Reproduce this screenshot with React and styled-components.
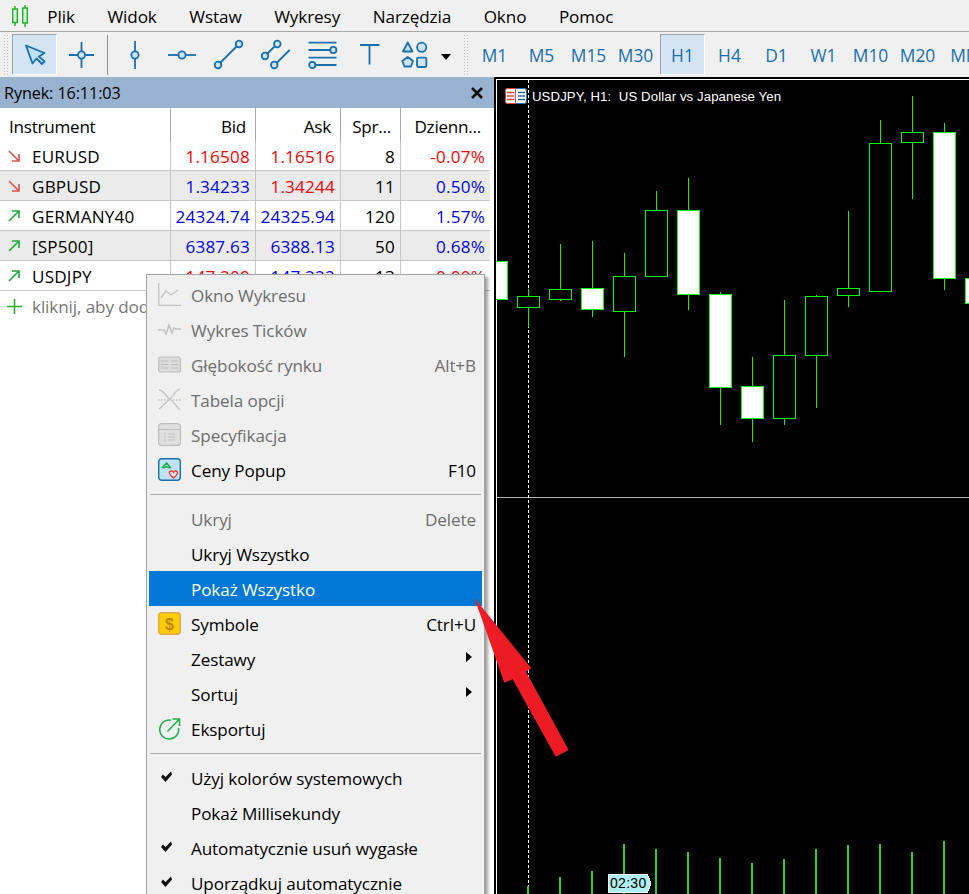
import React from "react";
import styled, { createGlobalStyle } from "styled-components";

const Global = createGlobalStyle`
  html, body { margin: 0; padding: 0; background: #fff; }
  #root { width: 969px; height: 894px; overflow: hidden; }
`;

const FONT = `"Open Sans", "Noto Sans", sans-serif`;
const BLUE = "#176fb0";
const LIGHT = "#cfe5f5";
const GREY_ICON = "#c2c2c2";

const Page = styled.div`
  position: relative;
  width: 969px;
  height: 894px;
  overflow: hidden;
  display: flex;
  flex-direction: column;
  font-family: ${FONT};
  font-size: 17.1px;
  letter-spacing: -0.1px;
  color: #000;
  background: #fff;
`;

const MenuBar = styled.div`
  flex: none;
  height: 31px;
  display: flex;
  align-items: center;
  padding-left: 12px;
  background: #f0f0f0;
  border-bottom: 1px solid #a8a8a8;
`;
const Logo = styled.svg`
  width: 17px;
  height: 22px;
  margin-right: 2px;
  flex: none;
`;
const MenuEntry = styled.span`
  padding: 2px 16.3px 0;
  white-space: nowrap;
`;

const Toolbar = styled.div`
  flex: none;
  height: 45px;
  display: flex;
  align-items: center;
  padding-left: 3px;
  background: #f0f0f0;
  overflow: hidden;
  box-sizing: border-box;
`;
const Grip = styled.div`
  flex: none;
  width: 6px;
  height: 41px;
  margin-right: 2px;
  margin-left: ${(p) => p.$gap || 0}px;
  background-image: radial-gradient(circle, #bdbdbd 0.9px, transparent 1px);
  background-size: 3px 3px;
`;
const ToolButton = styled.div`
  flex: none;
  width: 45px;
  height: 41px;
  margin: 0 1px;
  box-sizing: border-box;
  display: flex;
  align-items: center;
  justify-content: center;
  color: ${BLUE};
  font-size: 17.4px;
  letter-spacing: 0;
  border: 1px solid transparent;
  ${(p) =>
    p.$active &&
    `
    background: #d5e4f2;
    border-color: #a0a0a0 #fff #fff #a0a0a0;
  `}
`;
const ToolSvg = styled.svg`
  width: 32px;
  height: 32px;
  fill: none;
  stroke: ${BLUE};
  stroke-width: 1.8;
`;
const ToolSep = styled.div`
  flex: none;
  width: 6px;
  height: 40px;
  display: flex;
  justify-content: center;
  &::before {
    content: "";
    width: 1px;
    background: #8f8f8f;
    margin-left: -1px;
  }
`;
const Caret = styled.div`
  flex: none;
  width: 12px;
  display: flex;
  justify-content: center;
  padding-top: 5px;
  &::before {
    content: "";
    border-left: 5px solid transparent;
    border-right: 5px solid transparent;
    border-top: 6px solid #000;
  }
`;

const Main = styled.div`
  flex: 1;
  display: flex;
  min-height: 0;
`;
const LeftPanel = styled.div`
  flex: none;
  width: 494px;
  background: #fff;
`;
const PanelTitle = styled.div`
  height: 31px;
  display: flex;
  align-items: center;
  justify-content: space-between;
  padding: 0 11px 0 4px;
  font-size: 16.2px;
  background: #98b2d0;
`;
const CloseIcon = styled.svg`
  width: 12px;
  height: 12px;
  stroke: #111;
  stroke-width: 2.6;
`;
const Table = styled.div`
  width: 490px;
`;
const Row = styled.div`
  display: grid;
  grid-template-columns: 171px 85px 85px 60px 89px;
  height: 30px;
  box-sizing: border-box;
  border-bottom: 1px solid #c6c6c6;
  background: ${(p) => (p.$alt ? "#ebebeb" : "#fff")};
`;
const HeaderRow = styled(Row)`
  height: 33px;
  border-bottom: none;
`;
const Cell = styled.div`
  display: flex;
  align-items: center;
  justify-content: ${(p) => (p.$left ? "flex-start" : "flex-end")};
  padding: ${(p) => (p.$left ? "1px 0 0 8px" : "1px 5px 0 0")};
  border-right: ${(p) => (p.$last ? "none" : "1px solid #c6c6c6")};
  color: ${(p) => p.$color || "#000"};
  letter-spacing: 0.2px;
  white-space: nowrap;
  overflow: hidden;
  gap: 12px;
`;
const HeadCell = styled(Cell)`
  padding: ${(p) => (p.$left ? "3px 0 0 9px" : "3px 9px 0 0")};
  border-right-color: #a8a8a8;
  letter-spacing: -0.25px;
`;
const TrendSvg = styled.svg`
  width: 12px;
  height: 12px;
  flex: none;
  fill: none;
  stroke-width: 1.6;
  stroke: ${(p) => p.$color};
`;
const AddRow = styled.div`
  height: 30px;
  display: flex;
  align-items: center;
  gap: 10px;
  padding-left: 7px;
  color: #777;
  white-space: nowrap;
`;
const PlusSvg = styled.svg`
  width: 15px;
  height: 15px;
  stroke: #1fae2c;
  stroke-width: 1.6;
`;

const ChartPanel = styled.div`
  position: relative;
  flex: 1;
  background: #000;
`;
const ChartSvg = styled.svg`
  display: block;
  width: 475px;
  height: 817px;
`;
const ChartTitle = styled.div`
  position: absolute;
  left: 38px;
  top: 11px;
  font-family: "Liberation Sans", sans-serif;
  font-size: 13.2px;
  letter-spacing: 0.1px;
  line-height: 17px;
  color: #fff;
  white-space: pre;
`;
const TimeTag = styled.div`
  position: absolute;
  left: 116px;
  top: 798px;
  font-family: "Liberation Sans", sans-serif;
  font-size: 14px;
  line-height: 17px;
  letter-spacing: 0.3px;
  color: #000;
`;

const ContextMenu = styled.div`
  position: absolute;
  left: 146px;
  top: 274px;
  width: 339px;
  box-sizing: border-box;
  padding: 2px;
  background: #f0f0f0;
  border: 1px solid #a0a0a0;
  box-shadow: 3px 3px 3px rgba(0, 0, 0, 0.38);
`;
const Item = styled.div`
  height: 35px;
  display: flex;
  align-items: center;
  padding: 0 6px 0 9px;
  color: ${(p) => (p.$selected ? "#fff" : p.$disabled ? "#6e6e6e" : "#000")};
  background: ${(p) => (p.$selected ? "#0078d7" : "transparent")};
  white-space: nowrap;
`;
const IconSlot = styled.div`
  flex: none;
  width: 23px;
  height: 23px;
  margin-right: 10px;
  display: flex;
  align-items: center;
  justify-content: center;
`;
const MenuSvg = styled.svg`
  width: 23px;
  height: 23px;
  fill: none;
`;
const Label = styled.span`
  flex: 1;
  padding-top: 2px;
`;
const Shortcut = styled.span`
  padding-top: 2px;
`;
const Submenu = styled.span`
  width: 0;
  height: 0;
  margin-right: 4px;
  border-top: 5.5px solid transparent;
  border-bottom: 5.5px solid transparent;
  border-left: 6px solid #000;
  transform: translateY(-2px);
`;
const MenuSep = styled.div`
  height: 14px;
  display: flex;
  align-items: center;
  padding: 0 1px;
  &::before {
    content: "";
    flex: 1;
    height: 1px;
    background: #adadad;
  }
`;
const ArrowOverlay = styled.svg`
  position: absolute;
  left: 0;
  top: 0;
  width: 969px;
  height: 894px;
  pointer-events: none;
`;

/* ---------- data ---------- */
const RED = "#ff0000";
const PRICE_BLUE = "#0000ff";
const rows = [
  { s: "EURUSD", up: false, bid: "1.16508", bc: RED, ask: "1.16516", ac: RED, sp: "8", ch: "-0.07%", cc: RED },
  { s: "GBPUSD", up: false, bid: "1.34233", bc: PRICE_BLUE, ask: "1.34244", ac: RED, sp: "11", ch: "0.50%", cc: PRICE_BLUE },
  { s: "GERMANY40", up: true, bid: "24324.74", bc: PRICE_BLUE, ask: "24325.94", ac: PRICE_BLUE, sp: "120", ch: "1.57%", cc: PRICE_BLUE },
  { s: "[SP500]", up: true, bid: "6387.63", bc: PRICE_BLUE, ask: "6388.13", ac: PRICE_BLUE, sp: "50", ch: "0.68%", cc: PRICE_BLUE },
  { s: "USDJPY", up: true, bid: "147.209", bc: RED, ask: "147.222", ac: PRICE_BLUE, sp: "13", ch: "0.00%", cc: RED },
];

const timeframes = ["M1", "M5", "M15", "M30", "H1", "H4", "D1", "W1", "M10", "M20", "MN"];

// candles: x pixel centre, body top/bottom, wick top/bottom, filled
const candles = [
  [496, 262, 299, 262, 299, true],
  [528, 297, 307, 289, 327, false],
  [560, 290, 299, 244, 301, false],
  [592, 289, 309, 241, 317, true],
  [624, 277, 311, 253, 357, false],
  [656, 211, 276, 191, 276, false],
  [688, 211, 294, 178, 310, true],
  [720, 295, 387, 292, 425, true],
  [752, 387, 418, 357, 442, true],
  [784, 356, 418, 300, 425, false],
  [816, 297, 355, 295, 408, false],
  [848, 289, 295, 211, 307, false],
  [880, 144, 291, 120, 291, false],
  [912, 133, 142, 96, 199, false],
  [944, 133, 278, 123, 290, true],
  [976, 279, 303, 279, 303, true],
];
const volumes = [
  [528, 886], [560, 877], [592, 871], [624, 844], [656, 849], [688, 852], [720, 858],
  [752, 863], [784, 859], [816, 849], [848, 845], [880, 844], [912, 852], [944, 841],
];

/* ---------- icons ---------- */
const Ico = ({ children }) => <ToolSvg viewBox="0 0 32 32">{children}</ToolSvg>;
const toolIcons = [
  <Ico><path d="M7 6.5 25.5 14 20 17.5l5.5 5-2.5 2.5-5.5-5.5-4 5Z" fill="#bfe0f5" strokeLinejoin="round" /></Ico>,
  <Ico><path d="M3 16h25M15.5 3v26" /><circle cx="15.5" cy="16" r="3.6" fill={LIGHT} /></Ico>,
  <Ico><path d="M16 2v28" /><circle cx="16" cy="16" r="3.6" fill={LIGHT} /></Ico>,
  <Ico><path d="M2 16h28" /><circle cx="16" cy="16" r="3.6" fill={LIGHT} /></Ico>,
  <Ico><path d="M7 24 24 7" /><circle cx="5" cy="26" r="3.3" fill={LIGHT} /><circle cx="26" cy="5" r="3.3" fill={LIGHT} /></Ico>,
  <Ico><path d="M7 15 15 7M16.5 24 29.7 11" /><circle cx="17.3" cy="5" r="3.3" fill={LIGHT} /><circle cx="5" cy="17" r="3.3" fill={LIGHT} /><circle cx="14.3" cy="26" r="3.3" fill={LIGHT} /></Ico>,
  <Ico><path d="M1.5 3.7h28M1.5 11H23M1.5 18.7h28M8.5 26h21" /><circle cx="26.3" cy="11" r="3.1" fill={LIGHT} /><circle cx="5.3" cy="26" r="3.1" fill={LIGHT} /></Ico>,
  <Ico><path d="M6 6h19.5M15.5 6v19.5" /></Ico>,
  <Ico><path d="M6.7 3.5 11.5 12.5H2Z" fill={LIGHT} strokeLinejoin="round" /><circle cx="20.7" cy="8.3" r="4.6" fill={LIGHT} /><path d="M6.7 18 12 22l-2 5.5H3.4L1.4 22Z" fill={LIGHT} strokeLinejoin="round" /><rect x="16" y="18.6" width="9.4" height="9.4" rx="1.4" fill={LIGHT} /></Ico>,
];

const icons = {
  window: (
    <MenuSvg viewBox="0 0 23 23" stroke={GREY_ICON} strokeWidth="1.3">
      <path d="M.7 0v22.3H23" /><path d="M3 15l5-7 5 4 7-5" />
    </MenuSvg>
  ),
  ticks: (
    <MenuSvg viewBox="0 0 23 23" stroke={GREY_ICON} strokeWidth="1.5">
      <path d="M0 12h6l2 4 3-9 3 8 2-5 2 1h5" />
    </MenuSvg>
  ),
  depth: (
    <MenuSvg viewBox="0 0 23 23" stroke="#bdbdbd" strokeWidth="1.2">
      <rect x=".6" y="4" width="21.8" height="15" rx="2" fill="#dcdcdc" />
      <path d="M3 8h7M13 8h7M3 11.5h7M13 11.5h7M3 15h7M13 15h7" />
    </MenuSvg>
  ),
  options: (
    <MenuSvg viewBox="0 0 23 23" stroke={GREY_ICON} strokeWidth="1.3">
      <path d="M1 2c6 1 7 7 10.500 9S18 18 22 22M22 1c-6 2-6 7-10 10S5 18 1 21" />
      <path d="M0 12h23" strokeDasharray="1.500 1.500" />
    </MenuSvg>
  ),
  spec: (
    <MenuSvg viewBox="0 0 23 23" stroke="#bdbdbd" strokeWidth="1.2">
      <rect x=".6" y=".6" width="21.8" height="21.8" rx="3" fill="#e0e0e0" />
      <path d="M1 6.500h21M6 11h2M10 11h7M6 14h2M10 14h7M6 17h2M10 17h7" />
    </MenuSvg>
  ),
  popup: (
    <MenuSvg viewBox="0 0 23 23">
      <rect x=".7" y=".7" width="21.600" height="21.600" rx="3" fill="#bfe3f5" stroke="#1b6eaa" strokeWidth="1.400" />
      <path d="M4.500 9.500 8.500 5l4 4.500c-1.500 1-3-.2-4-1-1 .8-2.500 2-4 1Z" fill="none" stroke="#16b04a" strokeWidth="1.500" />
      <path d="M11.500 14c1.300-1.600 3.200-1 4 .3.800-1.300 2.700-1.900 4-.3.800 2-2 4.300-4 6-2-1.700-4.800-4-4-6Z" fill="#fde0e0" stroke="#e5413b" strokeWidth="1.400" />
    </MenuSvg>
  ),
  symbols: (
    <MenuSvg viewBox="0 0 23 23">
      <rect x=".7" y=".7" width="21.600" height="21.600" rx="3" fill="#ffcd00" stroke="#dca74e" strokeWidth="1.400" />
      <text x="11.500" y="17.500" textAnchor="middle" fontFamily="Liberation Sans, sans-serif" fontWeight="700" fontSize="16" fill="#b98a10">$</text>
    </MenuSvg>
  ),
  export: (
    <MenuSvg viewBox="0 0 23 23" stroke="#1fae4e" strokeWidth="1.500">
      <path d="M13 3.200A9.500 9.500 0 1 0 20.600 11" />
      <path d="M9.500 14.500 21 2.500M14.500 2h7v7" />
    </MenuSvg>
  ),
  check: (
    <MenuSvg viewBox="0 0 23 23">
      <path d="M3 11 5 8.500 7.500 11 13 5.500l1 3L7.500 16Z" fill="#111" />
    </MenuSvg>
  ),
};

const TrendIcon = ({ up }) => (
  <TrendSvg $color={up ? "#1fa83a" : "#dd5350"} viewBox="0 0 12 12">
    {up ? <path d="M1 11 11 1M4 1h7v7" /> : <path d="M1 1l10 10M11 4v7H4" />}
  </TrendSvg>
);

const MenuRow = ({ icon, label, shortcut, disabled, selected, sub }) => (
  <Item $disabled={disabled} $selected={selected}>
    <IconSlot>{icon ? icons[icon] : null}</IconSlot>
    <Label>{label}</Label>
    {shortcut ? <Shortcut>{shortcut}</Shortcut> : null}
    {sub ? <Submenu /> : null}
  </Item>
);

export default function App() {
  return (
    <Page>
      <Global />
      <MenuBar>
        <Logo viewBox="0 0 17 22" fill="none" stroke="#18b31f" strokeWidth="1.400">
          <path d="M3 1v20M13 0v22" />
          <rect x=".7" y="4" width="4.600" height="13.500" fill="#dff5df" />
          <rect x="10.700" y="3" width="4.600" height="15" fill="#dff5df" />
        </Logo>
        {["Plik", "Widok", "Wstaw", "Wykresy", "Narzędzia", "Okno", "Pomoc"].map((m) => (
          <MenuEntry key={m}>{m}</MenuEntry>
        ))}
      </MenuBar>

      <Toolbar>
        <Grip />
        <ToolButton $active>{toolIcons[0]}</ToolButton>
        <ToolButton>{toolIcons[1]}</ToolButton>
        <ToolSep />
        {toolIcons.slice(2).map((ic, i) => (
          <ToolButton key={i}>{ic}</ToolButton>
        ))}
        <Caret />
        <Grip $gap={11} />
        {timeframes.map((t) => (
          <ToolButton key={t} $active={t === "H1"}>{t}</ToolButton>
        ))}
      </Toolbar>

      <Main>
        <LeftPanel>
          <PanelTitle>
            <span>Rynek: 16:11:03</span>
            <CloseIcon viewBox="0 0 12 12"><path d="M1 1l10 10M11 1 1 11" /></CloseIcon>
          </PanelTitle>
          <Table>
            <HeaderRow>
              <HeadCell $left>Instrument</HeadCell>
              <HeadCell>Bid</HeadCell>
              <HeadCell>Ask</HeadCell>
              <HeadCell>Spr...</HeadCell>
              <HeadCell $last>Dzienn...</HeadCell>
            </HeaderRow>
            {rows.map((r, i) => (
              <Row key={r.s} $alt={i % 2 === 1}>
                <Cell $left><TrendIcon up={r.up} />{r.s}</Cell>
                <Cell $color={r.bc}>{r.bid}</Cell>
                <Cell $color={r.ac}>{r.ask}</Cell>
                <Cell>{r.sp}</Cell>
                <Cell $last $color={r.cc}>{r.ch}</Cell>
              </Row>
            ))}
            <AddRow>
              <PlusSvg viewBox="0 0 15 15"><path d="M0 7.500h15M7.500 0v15" /></PlusSvg>
              kliknij, aby dodać...
            </AddRow>
          </Table>
        </LeftPanel>

        <ChartPanel>
          <ChartSvg viewBox="494 77 475 817" shapeRendering="crispEdges">
            <rect x="496" y="79" width="473" height="1" fill="#fff" />
            <rect x="496" y="79" width="1" height="815" fill="#fff" />
            <rect x="497" y="497" width="472" height="1" fill="#b4b4b4" />
            <path d="M528.500 80V886" stroke="#fff" strokeDasharray="3 2" />
            {candles.map(([x, t, b, wt, wb, fill]) => (
              <g key={x} stroke="#00ff00" fill={fill ? "#fff" : "#000"}>
                <path d={`M${x + 0.5} ${wt}V${wb}`} />
                <rect x={x - 10.5} y={t - 0.5} width="22" height={b - t + 1} />
              </g>
            ))}
            <rect x="494" y="80" width="2" height="814" fill="#000" />
            {volumes.map(([x, t]) => (
              <rect key={x} x={x - 1} y={t} width="2" height={894 - t} fill="#32cd32" />
            ))}
            <polygon points="608.500,874.500 647.500,874.500 650.500,882 650.500,885 647.500,892.500 608.500,892.500" fill="#aeeeee" stroke="#fff" />
            <g shapeRendering="auto">
              <rect x="505.500" y="88.500" width="21" height="15" rx="2" fill="#fff" stroke="#1b6eaa" />
              <path d="M505.500 90.500a2 2 0 0 1 2-2h8v15h-8a2 2 0 0 1-2-2Z" fill="#fff" stroke="#e5453c" />
              <path d="M507 92.500h7M507 96h7M507 99.500h7" stroke="#e5453c" strokeWidth="1.500" />
              <path d="M518 92.500h7M518 96h7M518 99.500h7" stroke="#1b6eaa" strokeWidth="1.500" />
            </g>
          </ChartSvg>
          <ChartTitle>{"USDJPY, H1:  US Dollar vs Japanese Yen"}</ChartTitle>
          <TimeTag>02:30</TimeTag>
        </ChartPanel>
      </Main>

      <ContextMenu>
        <MenuRow disabled icon="window" label="Okno Wykresu" />
        <MenuRow disabled icon="ticks" label="Wykres Ticków" />
        <MenuRow disabled icon="depth" label="Głębokość rynku" shortcut="Alt+B" />
        <MenuRow disabled icon="options" label="Tabela opcji" />
        <MenuRow disabled icon="spec" label="Specyfikacja" />
        <MenuRow icon="popup" label="Ceny Popup" shortcut="F10" />
        <MenuSep />
        <MenuRow disabled label="Ukryj" shortcut="Delete" />
        <MenuRow label="Ukryj Wszystko" />
        <MenuRow selected label="Pokaż Wszystko" />
        <MenuRow icon="symbols" label="Symbole" shortcut="Ctrl+U" />
        <MenuRow label="Zestawy" sub />
        <MenuRow label="Sortuj" sub />
        <MenuRow icon="export" label="Eksportuj" />
        <MenuSep />
        <MenuRow icon="check" label="Użyj kolorów systemowych" />
        <MenuRow label="Pokaż Millisekundy" />
        <MenuRow icon="check" label="Automatycznie usuń wygasłe" />
        <MenuRow icon="check" label="Uporządkuj automatycznie" />
      </ContextMenu>

      <ArrowOverlay viewBox="0 0 969 894">
        <polygon
          points="474.300,597.700 531.300,668.300 526,671.700 568.700,750 555.700,756.700 512.700,679.300 504.300,682.700"
          fill="#ed1c24"
        />
      </ArrowOverlay>
    </Page>
  );
}
